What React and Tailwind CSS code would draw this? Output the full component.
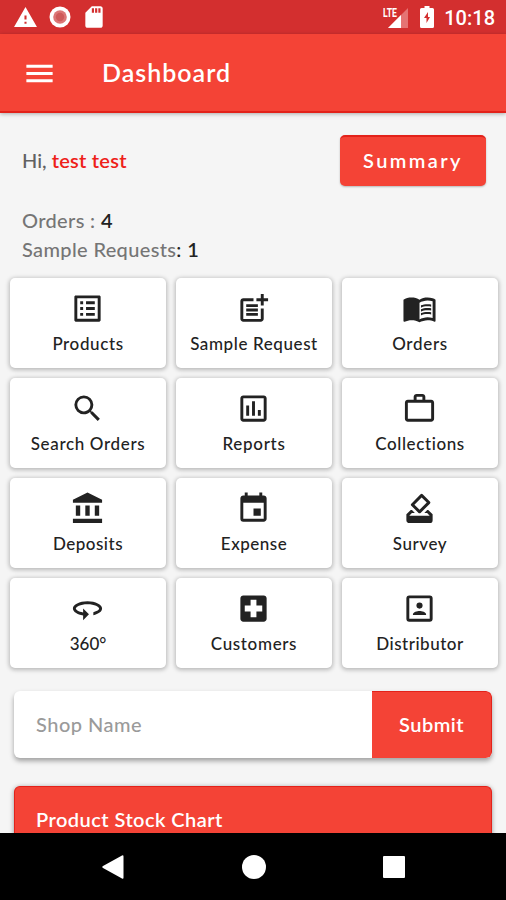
import {
  Md360,
  MdAccountBalance,
  MdEvent,
  MdHowToVote,
  MdLocalHospital,
  MdMenu,
  MdMenuBook,
  MdOutlineAssessment,
  MdOutlineListAlt,
  MdPostAdd,
  MdSdCard,
  MdSearch,
  MdWarning,
  MdWorkOutline,
} from "react-icons/md";

// boxed person with a solid head and shoulders
function PersonBox({ size, className }) {
  return (
    <svg width={size} height={size} viewBox="0 0 24 24" fill="currentColor" className={className}>
      <path
        fillRule="evenodd"
        d="M5 3h14a2 2 0 0 1 2 2v14a2 2 0 0 1-2 2H5a2 2 0 0 1-2-2V5a2 2 0 0 1 2-2zm0 2v14h14V5z"
      />
      <circle cx="12" cy="10" r="2.100" />
      <path d="M7.500 16.500v-.5c0-1.500 3-2.300 4.500-2.300s4.500.8 4.500 2.300v.5z" />
    </svg>
  );
}

const tiles = [
  { label: "Products", icon: MdOutlineListAlt, tracking: "tracking-[0.6px]" },
  { label: "Sample Request", icon: MdPostAdd, tracking: "tracking-[0.6px]" },
  { label: "Orders", icon: MdMenuBook, tracking: "tracking-[0.7px]" },
  { label: "Search Orders", icon: MdSearch, tracking: "tracking-[0.65px]" },
  { label: "Reports", icon: MdOutlineAssessment, tracking: "tracking-[0.7px]" },
  { label: "Collections", icon: MdWorkOutline, tracking: "tracking-[0.6px]" },
  { label: "Deposits", icon: MdAccountBalance, tracking: "tracking-[0.5px]" },
  { label: "Expense", icon: MdEvent, tracking: "tracking-[0.5px]" },
  { label: "Survey", icon: MdHowToVote, tracking: "tracking-[0.55px]" },
  { label: "360°", icon: Md360, tracking: "tracking-[0px]" },
  { label: "Customers", icon: MdLocalHospital, tracking: "tracking-[0.65px]" },
  { label: "Distributor", icon: PersonBox, tracking: "tracking-[0.5px]" },
];

function StatusBar() {
  return (
    <div className="flex h-[34px] shrink-0 items-center bg-[#d32f2f] pr-[11px] pl-[13px] text-white">
      <MdWarning size={25} />
      <svg className="ml-[11px]" width="22" height="22" viewBox="0 0 22 22">
        <circle cx="11" cy="11" r="10.5" fill="#fff" />
        <circle cx="11" cy="11" r="6.8" fill="#dc7676" />
        <circle cx="11" cy="11" r="4.2" fill="#cf5a5a" />
      </svg>
      <MdSdCard size={26} className="ml-[10px]" />
      <svg className="ml-auto" width="26" height="22" viewBox="0 0 26 22">
        <path d="M25 2v20H5z" fill="#e57373" />
        <path d="M18 9v13H5z" fill="#fff" />
        <path d="M0 0h14v11H0z" fill="#d32f2f" />
        <text x="0" y="10.5" fontSize="13" fontWeight="700" textLength="14" lengthAdjust="spacingAndGlyphs" fill="#fff" fontFamily="Roboto, sans-serif">
          LTE
        </text>
      </svg>
      <svg className="ml-[11px]" width="14" height="22" viewBox="0 0 14 22">
        <path d="M4.500 0h5v2H12.500a1.500 1.500 0 0 1 1.500 1.500v17a1.500 1.500 0 0 1-1.500 1.500h-11A1.500 1.500 0 0 1 0 20.500v-17A1.500 1.500 0 0 1 1.500 2h3z" fill="#fff" />
        <path d="M8 6 4 12h2.500v5L10 11H8z" fill="#d32f2f" />
      </svg>
      <span className="mt-[2px] ml-[10px] font-[Roboto,sans-serif] text-[20px] leading-none font-medium">
        10:18
      </span>
    </div>
  );
}

function AppBar() {
  return (
    <header className="relative flex h-[79px] shrink-0 items-center border-b-2 border-[#e3221a] bg-[#f44336] pt-[1px] pl-[22px] text-white shadow-[0_1px_4px_rgba(0,0,0,0.3)]">
      <MdMenu size={35} />
      <h1 className="ml-[45px] text-[25px] font-semibold tracking-[1px]">Dashboard</h1>
    </header>
  );
}

function Tile({ tile }) {
  const Icon = tile.icon;
  return (
    <button className="flex h-[90px] flex-col items-center rounded-[5px] bg-white pt-[13px] shadow-[0_1px_4px_1px_rgba(0,0,0,0.25)]">
      <Icon size={35} className="mr-[1px] shrink-0 text-[#222]" />
      <span className={`mt-[7px] text-[17px] leading-[22px] font-medium whitespace-nowrap text-[#222] ${tile.tracking}`}>
        {tile.label}
      </span>
    </button>
  );
}

function NavBar() {
  return (
    <nav className="relative flex h-[67px] shrink-0 items-center bg-black pl-[102px] text-white">
      <svg width="22" height="24" viewBox="0 0 22 24" fill="currentColor">
        <path d="M20 .5Q21.500-.3 21.500 1.500v21q0 1.800-1.500 1L1 13Q-.5 12 1 11z" />
      </svg>
      <div className="ml-[118px] size-[24px] rounded-full bg-white" />
      <div className="ml-[117px] size-[22px] rounded-[1px] bg-white" />
    </nav>
  );
}

export default function App() {
  return (
    <div className="flex h-[900px] w-[506px] flex-col overflow-hidden bg-[#f5f5f5] font-[Lato,sans-serif]">
      <StatusBar />
      <AppBar />

      <main className="flex min-h-0 flex-1 flex-col overflow-hidden">
        {/* Greeting */}
        <div className="mt-[22px] flex h-[51px] shrink-0 items-center justify-between pr-[20px] pl-[22px]">
          <p className="pb-[1px] text-[20px] font-medium text-[#616161]">
            Hi, <span className="font-semibold tracking-[0.25px] text-[#ee2018]">test test</span>
          </p>
          <button className="h-[51px] w-[146px] rounded-[5px] border-t-2 border-[#e3221a] bg-[#f44336] pb-[4px] text-[20px] font-semibold tracking-[2.4px] text-white shadow-[0_1px_2px_rgba(0,0,0,0.25)]">
            Summary
          </button>
        </div>

        {/* Totals */}
        <div className="mt-[20px] shrink-0 pl-[22px] text-[20px] leading-[29px] font-medium tracking-[0.35px] text-[#757575]">
          <p>
            Orders : <span className="font-semibold text-[#222]">4</span>
          </p>
          <p>
            Sample Requests<span className="text-[#222]">: </span>
            <span className="font-semibold text-[#222]">1</span>
          </p>
        </div>

        {/* Menu */}
        <div className="mt-[14px] grid shrink-0 grid-cols-3 gap-[10px] pr-[8px] pl-[10px]">
          {tiles.map((tile) => (
            <Tile key={tile.label} tile={tile} />
          ))}
        </div>

        {/* Shop search */}
        <div className="mx-[14px] mt-[23px] flex h-[67px] shrink-0 overflow-hidden rounded-[6px] bg-white shadow-[0_3px_5px_rgba(0,0,0,0.35)]">
          <div className="flex flex-1 items-center pb-[2px] pl-[22px] text-[20px] font-medium tracking-[0.5px] text-[#9a9a9a]">
            Shop Name
          </div>
          <button className="w-[120px] rounded-r-[6px] border-t border-r border-[#e3221a] bg-[#f44336] pb-[3px] text-[20px] font-semibold tracking-[0.5px] text-white">
            Submit
          </button>
        </div>

        {/* Stock chart */}
        <section className="mx-[14px] mt-[28px] h-[120px] shrink-0 rounded-t-[6px] border-x border-t border-[#e3221a] bg-[#f44336] pt-[19px] pl-[21px] shadow-[0_1px_5px_rgba(0,0,0,0.4)]">
          <h2 className="text-[20px] leading-[26px] font-semibold tracking-[0.45px] text-white">Product Stock Chart</h2>
        </section>
      </main>

      <NavBar />
    </div>
  );
}
